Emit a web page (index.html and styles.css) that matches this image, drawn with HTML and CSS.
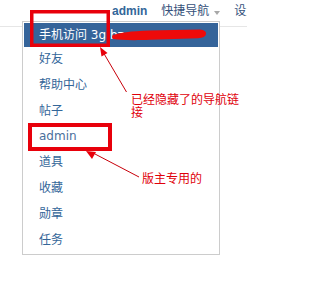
FILE: index.html
```html
<!DOCTYPE html>
<html lang="zh-CN">
<head>
<meta charset="utf-8">
<title>快捷导航</title>
<link rel="stylesheet" href="styles.css">
</head>
<body>
<div class="page">
  <header class="topbar">
    <span class="user">admin</span>
    <span class="nav">快捷导航<span class="caret"></span></span>
    <span class="nav">设置</span>
  </header>

  <ul class="menu">
    <li class="item active">手机访问 3g.bz</li>
    <li class="item">好友</li>
    <li class="item">帮助中心</li>
    <li class="item">帖子</li>
    <li class="item latin">admin</li>
    <li class="item">道具</li>
    <li class="item">收藏</li>
    <li class="item">勋章</li>
    <li class="item">任务</li>
  </ul>

  <svg class="marks" width="247" height="298" viewBox="0 0 247 298" xmlns="http://www.w3.org/2000/svg">
    <path d="M113,35 C120,33 130,31 150,30.5 L200,29.5 Q206.5,30 206,34 Q205.5,38 198,38.2 L150,39.8 C132,40.5 120,40 113,39 Q111,37 113,35 Z" fill="#ee0a0a"/>
    <rect x="31.75" y="11.75" width="76.5" height="33.5" fill="none" stroke="#e8000b" stroke-width="3.5"/>
    <rect x="30" y="125" width="80" height="24" fill="none" stroke="#e8000b" stroke-width="4"/>
    <line x1="126.5" y1="92" x2="103" y2="52" stroke="#c8000a" stroke-width="1"/>
    <polygon points="100,47 107.5,53 101.5,56.5" fill="#e8000b"/>
    <line x1="95" y1="154" x2="139" y2="177" stroke="#c8000a" stroke-width="1"/>
    <polygon points="86,151 96,152 92,159" fill="#e8000b"/>
  </svg>

  <div class="note note-hidden">已经隐藏了的导航链接</div>
  <div class="note note-mod">版主专用的</div>
</div>
</body>
</html>
```
FILE: styles.css
```css
html, body {
  margin: 0;
  padding: 0;
  background: #ffffff;
}

body {
  width: 247px;
  height: 298px;
  overflow: hidden;
  font-family: "DejaVu Sans", "Noto Sans CJK SC", sans-serif;
  font-size: 12px;
}

.page {
  position: relative;
  width: 247px;
  height: 298px;
  overflow: hidden;
}

.topbar {
  display: flex;
  align-items: flex-start;
  height: 26px;
  padding-left: 112px;
  border-bottom: 1px solid #e6e6e6;
  white-space: nowrap;
  line-height: 23px;
}

.user {
  font-family: "Liberation Sans", "Noto Sans CJK SC", sans-serif;
  font-weight: bold;
  color: #336699;
  margin-right: 14px;
}

.nav {
  display: flex;
  align-items: center;
  color: #34507a;
  margin-right: 14px;
}

.caret {
  width: 0;
  height: 0;
  margin-left: 5px;
  margin-top: 2px;
  border-left: 3px solid transparent;
  border-right: 3px solid transparent;
  border-top: 4px solid #a8a8a8;
}

.menu {
  position: absolute;
  left: 22px;
  top: 21px;
  width: 198px;
  box-sizing: border-box;
  margin: 0;
  padding: 1px;
  list-style: none;
  background: #ffffff;
  border: 1px solid #cccccc;
}

.item {
  height: 25.8px;
  line-height: 25.8px;
  padding-left: 15px;
  color: #336699;
  white-space: nowrap;
  overflow: hidden;
}

.item.active {
  height: 24px;
  line-height: 24px;
  background: #35649a;
  color: #ffffff;
}

.item.latin {
  color: #4a6f9c;
}

.marks {
  position: absolute;
  left: 0;
  top: 0;
  pointer-events: none;
}

.note {
  position: absolute;
  color: #e0000a;
  font-family: "Noto Sans CJK SC", sans-serif;
  font-size: 12px;
  line-height: 13px;
}

.note-hidden {
  left: 131px;
  top: 92px;
  width: 110px;
}

.note-mod {
  left: 142px;
  top: 171px;
  white-space: nowrap;
}
```
